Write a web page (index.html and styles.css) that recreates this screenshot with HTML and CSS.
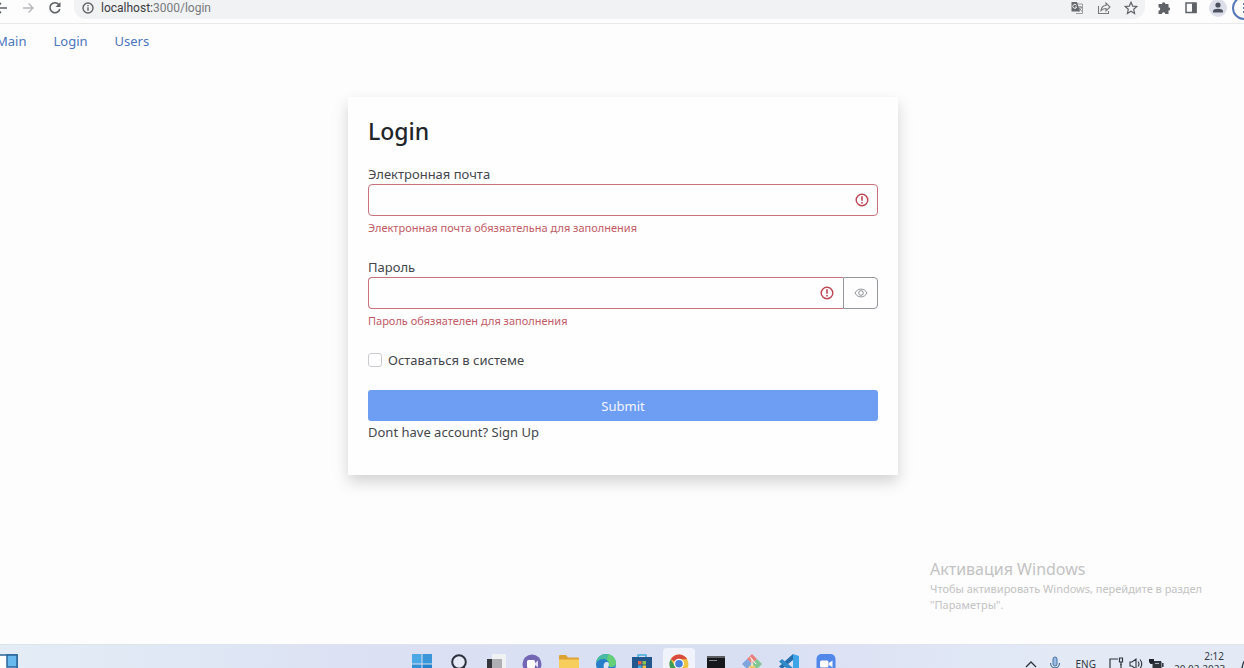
FILE: index.html
```html
<!DOCTYPE html>
<html lang="ru">
<head>
<meta charset="utf-8">
<title>Login</title>
<link rel="stylesheet" href="styles.css">
</head>
<body>
<header class="toolbar">
  <div class="history">
    <button class="tool" aria-label="Back"><svg viewBox="0 0 16 16"><path d="M14 8H3M8 3L3 8l5 5" fill="none" stroke="#5f6368" stroke-width="1.6"/></svg></button>
    <button class="tool" aria-label="Forward"><svg viewBox="0 0 16 16"><path d="M3 8h10M8.500 3.500L13 8l-4.500 4.500" fill="none" stroke="#b4b6b9" stroke-width="1.300"/></svg></button>
    <button class="tool" aria-label="Reload"><svg viewBox="0 0 16 16"><path d="M12.800 9A5 5 0 1 1 11.800 4.500" fill="none" stroke="#5f6368" stroke-width="1.600"/><path d="M13.500 2v5h-5z" fill="#5f6368"/></svg></button>
  </div>
  <div class="address">
    <svg class="info" viewBox="0 0 16 16"><circle cx="8" cy="8" r="5" fill="none" stroke="#5f6368" stroke-width="1.400"/><path d="M8 7.200v3.500M8 5v1.300" stroke="#5f6368" stroke-width="1.400"/></svg>
    <span class="url"><span class="host">localhost:</span>3000/login</span>
    <button class="tool" aria-label="Translate"><svg viewBox="0 0 16 16"><path d="M8 4h5.500v9.500H7" fill="none" stroke="#9a9da1"/><path d="M9 7h4M11 6v1M12.500 7c-.5 2-2 3.500-3 4M10 8l3 3.500" fill="none" stroke="#85888c"/><path d="M2.500 2H8l3 9.500H2.500z" fill="#66696d"/><path d="M7.500 5.300A2 2 0 1 0 7.700 7H6" fill="none" stroke="#f1f3f4"/></svg></button>
    <button class="tool" aria-label="Share"><svg viewBox="0 0 16 16"><path d="M3 6.500H2.500v7h10V11M5 10.500C5.500 7 7.500 5.500 10 5.500V3l4 4-4 4V8.500C8 8.500 6.500 9 5 10.500z" fill="none" stroke="#777a7e" stroke-width="1.100"/></svg></button>
    <button class="tool" aria-label="Bookmark"><svg viewBox="0 0 16 16"><path d="M8 2.200l1.700 3.900 4.100.4-3.100 2.800.9 4.100L8 11.200l-3.600 2.200.9-4.100-3.100-2.800 4.100-.4z" fill="none" stroke="#5f6368" stroke-width="1.200"/></svg></button>
  </div>
  <div class="extras">
    <button class="tool" aria-label="Extensions"><svg viewBox="0 0 16 16"><path d="M2.500 4H6a1.700 1.700 0 0 1 3.400 0H12.500v3.200a1.700 1.700 0 0 1 0 3.400V14H9.300a1.700 1.700 0 0 0-3.400 0H2.500v-3.300a1.700 1.700 0 0 0 0-3.400z" fill="#5f6368"/></svg></button>
    <button class="tool" aria-label="Side panel"><svg viewBox="0 0 16 16"><path d="M3 3h10v9.500H3z" fill="none" stroke="#5f6368" stroke-width="1.500"/><path d="M9 3h4.500v10H9z" fill="#5f6368"/></svg></button>
    <button class="tool profile" aria-label="Profile"><svg viewBox="0 0 16 16"><circle cx="8" cy="5" r="2.600" fill="#4d5261"/><path d="M3 12.500V11c0-3 10-3 10 0v1.500z" fill="#4d5261"/></svg></button>
    <button class="update" aria-label="Menu"><svg viewBox="0 0 20 20"><path d="M9 6h2M9 10h2M9 14h2" stroke="#5478b8" stroke-width="2"/></svg></button>
  </div>
</header>

<nav class="nav">
  <a href="#main">Main</a>
  <a href="#login">Login</a>
  <a href="#users">Users</a>
</nav>

<main class="page">
  <form class="card">
    <h1 class="title">Login</h1>
    <div class="field">
      <label for="email">Электронная почта</label>
      <div class="control">
        <input class="input" id="email" type="email" aria-describedby="email-error">
        <svg class="alert" viewBox="0 0 14 14"><circle cx="7" cy="7" r="5.800" fill="none" stroke="#bf4452" stroke-width="1.400"/><path d="M7 3.300v4.400M7 9v1.600" stroke="#bf4452" stroke-width="1.600"/></svg>
      </div>
      <p class="error" id="email-error">Электронная почта обязяательна для заполнения</p>
    </div>
    <div class="field">
      <label for="password">Пароль</label>
      <div class="group">
        <div class="control">
          <input class="input joined" id="password" type="password" aria-describedby="password-error">
          <svg class="alert" viewBox="0 0 14 14"><circle cx="7" cy="7" r="5.800" fill="none" stroke="#bf4452" stroke-width="1.400"/><path d="M7 3.300v4.400M7 9v1.600" stroke="#bf4452" stroke-width="1.600"/></svg>
        </div>
        <button class="reveal" type="button" aria-label="Показать пароль"><svg viewBox="0 0 14 14"><path d="M1 7c2.500-5.200 9.500-5.200 12 0-2.500 5.200-9.500 5.200-12 0z" fill="none" stroke="#8d9297"/><circle cx="7" cy="7" r="2.300" fill="none" stroke="#8d9297"/></svg></button>
      </div>
      <p class="error" id="password-error">Пароль обязяателен для заполнения</p>
    </div>
    <label class="remember"><input class="check" type="checkbox">Оставаться в системе</label>
    <button class="submit" type="button">Submit</button>
    <p class="signup">Dont have account? <a href="#signup">Sign Up</a></p>
  </form>
</main>

<aside class="activation">
  <p class="activation-title">Активация Windows</p>
  <p>Чтобы активировать Windows, перейдите в раздел "Параметры".</p>
</aside>

<footer class="taskbar">
  <button class="widgets" aria-label="Widgets"><svg viewBox="0 0 20 20"><path d="M1 1h18v18H1z" fill="#fff" stroke="#28659b" stroke-width="1.500"/><path d="M9 1h10v12H9z" fill="#68b9ee" stroke="#28659b" stroke-width="1.500"/><path d="M0 1h2v18H0z" fill="#4ba2dc"/></svg></button>
  <div class="apps">
    <button class="app" aria-label="Start"><svg viewBox="0 0 20 20"><path d="M0 0h9.500v9.500H0z" fill="#4aa9e4"/><path d="M10.500 0H20v9.500h-9.500z" fill="#3b96d9"/><path d="M0 10.500h9.500V20H0z" fill="#348fd5"/><path d="M10.500 10.500H20V20h-9.500z" fill="#2582cc"/></svg></button>
    <button class="app" aria-label="Search"><svg viewBox="0 0 20 20"><circle cx="10" cy="8" r="6.800" fill="#e6eaf6" stroke="#2c323d" stroke-width="2"/><path d="M14 13l5 5" stroke="#2c323d" stroke-width="2"/></svg></button>
    <button class="app" aria-label="Task view"><svg viewBox="0 0 20 20"><path d="M6 0h14v14H6z" fill="#f0f1f2"/><path d="M1 5h15v15H1z" fill="#34363b"/><path d="M6 5h10v12H6z" fill="#afb0b3"/></svg></button>
    <button class="app" aria-label="Chat"><svg viewBox="0 0 20 20"><circle cx="10" cy="10" r="9.500" fill="#7468b4"/><rect x="5" y="6" width="8" height="8" rx="1.500" fill="#fff"/><path d="M13 9l3-2.500v7L13 11z" fill="#e6e1fb"/></svg></button>
    <button class="app" aria-label="Explorer"><svg viewBox="0 0 20 20"><path d="M0 2q0-1 1-1h6l2 2.500h10q1 0 1 1V9H0z" fill="#dda234"/><path d="M0 5.500h20V20H0z" fill="#f7ce5c"/></svg></button>
    <button class="app" aria-label="Edge"><svg viewBox="0 0 20 20"><circle cx="10" cy="10" r="10" fill="#277fc9"/><path d="M0 9C1-3 19-3 20 9c0 4-5 5-8 3 2-4-1-7-5-7-3 0-6 2-7 4z" fill="#48bba0"/><path d="M12 .200C17 1 20 5 20 9c0 4-5 5-8 3 2-3 1-5-1-6z" fill="#65cf78"/><path d="M12.500 12c1-3 0-4-2-4-4 0-4 8 1 10" fill="#d9e5f5"/></svg></button>
    <button class="app" aria-label="Store"><svg viewBox="0 0 20 20"><path d="M6 4V1h8v3" fill="none" stroke="#45a9dc" stroke-width="1.500"/><path d="M0 3h20v17H0z" fill="#22578e"/><path d="M6 7h3.500v3.500H6z" fill="#e66043"/><path d="M10.500 7H14v3.500h-3.500z" fill="#8ac04d"/><path d="M6 11.500h3.500V15H6z" fill="#47acea"/><path d="M10.500 11.500H14V15h-3.500z" fill="#f3c548"/></svg></button>
    <button class="app active" aria-label="Chrome"><svg viewBox="0 0 20 20"><circle cx="10" cy="10" r="9.500" fill="#f0c443"/><path d="M10 10L1.800 5.200A9.500 9.500 0 0 1 18.200 5.200H10z" fill="#d84b3e"/><path d="M1.800 5.200L10 19.500A9.500 9.500 0 0 1 1.800 5.200z" fill="#3f9d5a"/><circle cx="10" cy="9.800" r="5" fill="#fff"/><circle cx="10" cy="9.800" r="3.800" fill="#4381dc"/></svg></button>
    <button class="app" aria-label="Terminal"><svg viewBox="0 0 20 20"><path d="M1 2h18v18H1z" fill="#16171a"/><path d="M1 2h18v2H1z" fill="#5b5d63"/><path d="M3 6.500h8" fill="none" stroke="#85878c"/></svg></button>
    <button class="app" aria-label="Git"><svg viewBox="0 0 20 20"><path d="M10 0l5 5-5 5-5-5z" fill="#e8817a"/><path d="M15 5l5 5-5 5-5-5z" fill="#82c795"/><path d="M5 5l5 5-5 5-5-5z" fill="#7fa5df"/><path d="M10 10l5 5-5 5-5-5z" fill="#ebc96f"/><path d="M8 3l6 7M10 5v7" stroke="#fff"/></svg></button>
    <button class="app" aria-label="VS Code"><svg viewBox="0 0 20 20"><path d="M14 0l6 2v16l-6 2z" fill="#3ea5e8"/><path d="M14 0v6L3 15 0 12.500z" fill="#256fad"/><path d="M0 7.500L3 5l11 9v6z" fill="#3189ca"/></svg></button>
    <button class="app" aria-label="Zoom"><svg viewBox="0 0 20 20"><rect x=".5" y="0" width="19" height="20" rx="5" fill="#5087e9"/><rect x="4" y="6.500" width="8.500" height="7" rx="1.500" fill="#fff"/><path d="M13 9l3.500-2.500v7L13 11z" fill="#fff"/></svg></button>
  </div>
  <div class="tray">
    <svg class="mark" viewBox="0 0 16 16"><path d="M3 11l5-5 5 5" fill="none" stroke="#30343b" stroke-width="1.300"/></svg>
    <svg class="mark mic" viewBox="0 0 16 16"><rect x="6" y="1" width="4" height="9" rx="2" fill="#9cbce6" stroke="#49729f"/><path d="M3.500 7c0 6.500 9 6.500 9 0M8 12v4" fill="none" stroke="#49729f" stroke-width="1.200"/></svg>
    <span class="lang">ENG</span>
    <svg class="mark" viewBox="0 0 16 16"><path d="M10 3H2v10h11V8" fill="none" stroke="#30343b" stroke-width="1.200"/><path d="M11.500 2h3v4h-3zM13 6v3" fill="none" stroke="#30343b" stroke-width="1.200"/></svg>
    <svg class="mark" viewBox="0 0 16 16"><path d="M2 6h2l4-3v10l-4-3H2zM10 5.500q2 2.500 0 5M12 3.500q3.500 4.500 0 9" fill="none" stroke="#30343b" stroke-width="1.100"/></svg>
    <svg class="mark" viewBox="0 0 16 16"><path d="M5 5.500h8v6.500H5z" fill="#30343b" stroke="#30343b"/><path d="M14.800 7v4" stroke="#30343b" stroke-width="1.500"/><path d="M7 7.500h4" stroke="#a9b2c0"/><path d="M1 3h5v3L4.500 8h-2L1 6z" fill="#202329"/></svg>
    <div class="clock"><time>2:12</time><time>20.02.2023</time></div>
    <svg class="mark" viewBox="0 0 16 16"><path d="M2 13h12M4 13c3-2 0-9 7-10" fill="none" stroke="#30343b" stroke-width="1.300"/></svg>
  </div>
</footer>
</body>
</html>
```
FILE: styles.css
```css
* { box-sizing: border-box; }

body {
  margin: 0;
  height: 100vh;
  overflow: hidden;
  display: flex;
  flex-direction: column;
  background: #fdfdfd;
  color: #43474d;
  font: 13px/20px "Noto Sans", "Open Sans", sans-serif;
}

p, h1 { margin: 0; }
a { color: inherit; text-decoration: none; }
button { margin: 0; padding: 0; border: 0; background: none; font: inherit; }
svg { display: block; flex: none; }

/* Browser toolbar */
.toolbar {
  flex: none;
  display: flex;
  align-items: flex-start;
  height: 24px;
  overflow: hidden;
  border-bottom: 1px solid #e9e9ea;
}
.tool, .tool svg { flex: none; width: 16px; height: 16px; }
.history { display: flex; gap: 11px; margin-left: -7px; }
.address {
  flex: 1;
  display: flex;
  gap: 11px;
  height: 19px;
  margin: 0 11px;
  padding: 0 6px;
  border-radius: 0 0 12px 12px;
  background: #f1f2f3;
}
.info { width: 16px; height: 16px; }
.url {
  flex: 1;
  margin-left: -6px;
  color: #777a7e;
  font: 12px/16px Roboto, sans-serif;
}
.host { color: #3a3c40; }
.extras { display: flex; gap: 11px; }
.profile { border-radius: 8px; box-shadow: 0 0 0 1px #dcdfea; background: #dcdfea; }
.update {
  flex: none;
  width: 24px;
  height: 24px;
  margin: -4px -12px 0 -5px;
  border: 2px solid #5478b8;
  border-radius: 50%;
}
.update svg { width: 20px; height: 20px; }

/* Site navigation */
.nav {
  flex: none;
  display: flex;
  gap: 27px;
  margin-left: -4px;
  padding: 7px 0;
  color: #4a76bd;
}

/* Login card */
.page {
  flex: 1;
  display: flex;
  justify-content: center;
  align-items: flex-start;
  padding: 39px 0 0 2px;
}
.card {
  width: 100%;
  max-width: 550px;
  padding: 20px 20px 32px;
  background: #fefefe;
  box-shadow: 0 7px 14px rgba(0, 0, 0, 0.17);
}
.title {
  margin-bottom: 18px;
  color: #212529;
  font-size: 23px;
  line-height: 29px;
  font-weight: 500;
}
.field { margin-bottom: 19px; }
.field label { display: block; }
.control { position: relative; flex: 1; }
.input {
  display: block;
  width: 100%;
  height: 32px;
  padding: 4px 32px 4px 10px;
  border: 1px solid #c8737d;
  border-radius: 4px;
  background: #fefefe;
  font: inherit;
}
.joined { border-radius: 4px 0 0 4px; border-right: 0; }
.alert {
  position: absolute;
  top: 9px;
  right: 9px;
  width: 14px;
  height: 14px;
}
.group { display: flex; }
.reveal {
  display: grid;
  place-items: center;
  width: 35px;
  border: 1px solid #93979b;
  border-radius: 0 4px 4px 0;
}
.reveal svg { width: 14px; height: 14px; }
.error {
  margin-top: 2px;
  color: #c25b66;
  font-size: 11px;
  line-height: 20px;
}
.remember {
  display: flex;
  align-items: center;
  gap: 6px;
  margin-bottom: 20px;
}
.check {
  appearance: none;
  width: 14px;
  height: 14px;
  margin: 0;
  border: 1px solid #c9cbce;
  border-radius: 3px;
  background: #fff;
}
.submit {
  display: block;
  width: 100%;
  height: 31px;
  border-radius: 3px;
  background: #6e9df4;
  color: #f4f7fe;
}
.signup { line-height: 22px; }

/* Windows activation overlay */
.activation {
  position: absolute;
  right: 14px;
  bottom: 55px;
  width: 300px;
  color: #c3c3c3;
  font-size: 11px;
  line-height: 16px;
}
.activation-title { font-size: 16px; line-height: 24px; }

/* Taskbar */
.taskbar {
  flex: none;
  display: grid;
  grid-template-columns: 1fr 440px 1fr;
  height: 24px;
  overflow: hidden;
  border-top: 1px solid #dfe3ea;
  background: linear-gradient(90deg, #e4edf6 0, #dbe1f3 30%, #d9dff3 60%, #e3eaf6 85%);
}
.widgets { justify-self: start; align-self: start; margin: 9px 0 0 -2px; }
.widgets svg { width: 20px; height: 20px; }
.apps {
  display: grid;
  grid-template-columns: repeat(12, 1fr);
  height: 36px;
  margin: 0 -2px 0 2px;
}
.app {
  display: flex;
  justify-content: center;
  width: 32px;
  height: 32px;
  margin-top: 3px;
  padding-top: 6px;
  justify-self: center;
  border-radius: 4px;
}
.app svg { width: 20px; height: 20px; }
.active { background: #f0f3fb; }
.tray {
  display: flex;
  justify-content: flex-end;
  align-items: flex-start;
  gap: 4px;
  height: 36px;
  padding-top: 11px;
  margin-right: -9px;
  color: #34383f;
  font-size: 10px;
  line-height: 16px;
}
.mark { width: 16px; height: 16px; }
.mic { margin-left: 4px; }
.lang { margin: 0 8px 0 9px; }
.clock {
  display: flex;
  flex-direction: column;
  width: 50px;
  margin: -6px 9px 0 6px;
  text-align: right;
  line-height: 13px;
}
```
